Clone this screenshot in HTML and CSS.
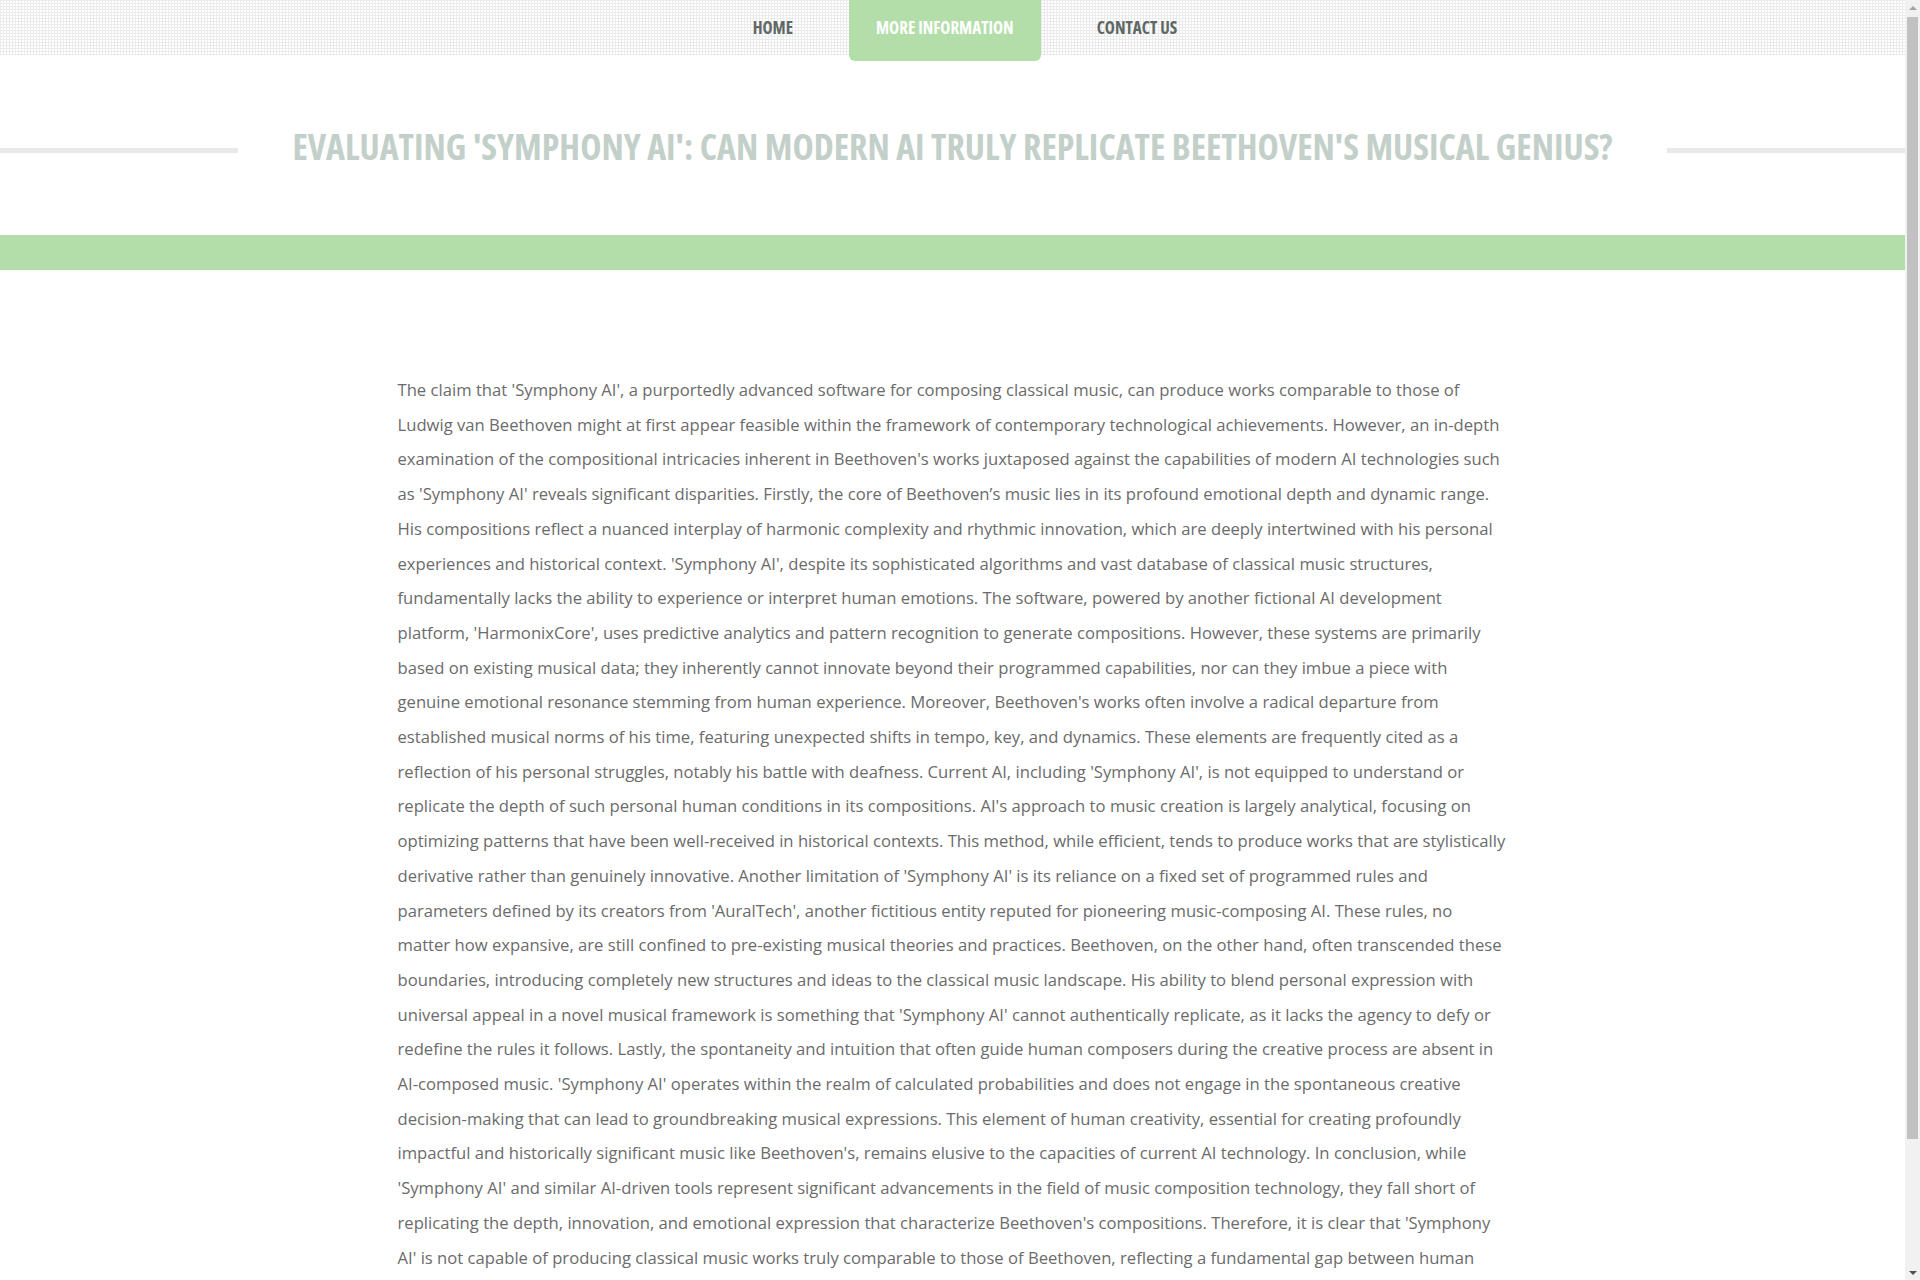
FILE: index.html
```html
<!DOCTYPE html>
<html lang="en">
<head>
<meta charset="utf-8">
<title>Evaluating 'Symphony AI'</title>
<link rel="stylesheet" href="styles.css">
</head>
<body>
<div class="viewport">
  <div class="page">
    <header class="topnav">
      <ul class="menu">
        <li class="item"><a href="#">Home</a></li>
        <li class="item item-active"><a href="#">More Information</a></li>
        <li class="item"><a href="#">Contact Us</a></li>
      </ul>
    </header>
    <section class="title-row">
      <span class="rule"></span>
      <h1 class="title">Evaluating 'Symphony AI': Can Modern AI Truly Replicate Beethoven's Musical Genius?</h1>
      <span class="rule"></span>
    </section>
    <div class="band"></div>
    <main class="container">
      <p class="article">The claim that 'Symphony AI', a purportedly advanced software for composing classical music, can produce works comparable to those of Ludwig van Beethoven might at first appear feasible within the framework of contemporary technological achievements. However, an in-depth examination of the compositional intricacies inherent in Beethoven's works juxtaposed against the capabilities of modern AI technologies such as 'Symphony AI' reveals significant disparities. Firstly, the core of Beethoven’s music lies in its profound emotional depth and dynamic range. His compositions reflect a nuanced interplay of harmonic complexity and rhythmic innovation, which are deeply intertwined with his personal experiences and historical context. 'Symphony AI', despite its sophisticated algorithms and vast database of classical music structures, fundamentally lacks the ability to experience or interpret human emotions. The software, powered by another fictional AI development platform, 'HarmonixCore', uses predictive analytics and pattern recognition to generate compositions. However, these systems are primarily based on existing musical data; they inherently cannot innovate beyond their programmed capabilities, nor can they imbue a piece with genuine emotional resonance stemming from human experience. Moreover, Beethoven's works often involve a radical departure from established musical norms of his time, featuring unexpected shifts in tempo, key, and dynamics. These elements are frequently cited as a reflection of his personal struggles, notably his battle with deafness. Current AI, including 'Symphony AI', is not equipped to understand or replicate the depth of such personal human conditions in its compositions. AI's approach to music creation is largely analytical, focusing on optimizing patterns that have been well-received in historical contexts. This method, while efficient, tends to produce works that are stylistically derivative rather than genuinely innovative. Another limitation of 'Symphony AI' is its reliance on a fixed set of programmed rules and parameters defined by its creators from 'AuralTech', another fictitious entity reputed for pioneering music-composing AI. These rules, no matter how expansive, are still confined to pre-existing musical theories and practices. Beethoven, on the other hand, often transcended these boundaries, introducing completely new structures and ideas to the classical music landscape. His ability to blend personal expression with universal appeal in a novel musical framework is something that 'Symphony AI' cannot authentically replicate, as it lacks the agency to defy or redefine the rules it follows. Lastly, the spontaneity and intuition that often guide human composers during the creative process are absent in AI-composed music. 'Symphony AI' operates within the realm of calculated probabilities and does not engage in the spontaneous creative decision-making that can lead to groundbreaking musical expressions. This element of human creativity, essential for creating profoundly impactful and historically significant music like Beethoven's, remains elusive to the capacities of current AI technology. In conclusion, while 'Symphony AI' and similar AI-driven tools represent significant advancements in the field of music composition technology, they fall short of replicating the depth, innovation, and emotional expression that characterize Beethoven's compositions. Therefore, it is clear that 'Symphony AI' is not capable of producing classical music works truly comparable to those of Beethoven, reflecting a fundamental gap between human creativity and artificial intelligence.</p>
    </main>
  </div>
  <aside class="scrollbar" aria-hidden="true">
    <span class="sb-btn sb-up"><span class="tri tri-up"></span></span>
    <span class="sb-thumb"></span>
    <span class="sb-spacer"></span>
    <span class="sb-btn sb-down"><span class="tri tri-down"></span></span>
  </aside>
</div>
</body>
</html>
```
FILE: styles.css
```css
html, body {
  margin: 0;
  padding: 0;
  background: #ffffff;
}

body {
  font-family: "Open Sans", "Liberation Sans", sans-serif;
  color: #6b6b6b;
}

.viewport {
  display: flex;
  align-items: flex-start;
}

.page {
  flex: 1 1 auto;
  min-width: 0;
}

/* top navigation */
.topnav {
  height: 55px;
  background-color: #ffffff;
  background-image:
    linear-gradient(#ebebeb 1px, transparent 1px),
    linear-gradient(90deg, #ebebeb 1px, transparent 1px);
  background-size: 3px 3px;
  position: relative;
  z-index: 2;
}

.menu {
  list-style: none;
  margin: 0;
  padding: 0 0 0 25px;
  display: flex;
  justify-content: center;
  align-items: flex-start;
  gap: 29px;
}

.item a {
  display: block;
  padding: 18px 27px 23px;
  line-height: 20px;
  font-family: "Open Sans", "Liberation Sans Narrow", sans-serif;
  font-stretch: 75%;
  font-weight: 700;
  font-size: 17px;
  text-transform: uppercase;
  text-decoration: none;
  color: #5e6864;
}

.item-active a {
  background: #b3dea9;
  color: #ffffff;
  border-radius: 0 0 6px 6px;
}

/* title */
.title-row {
  display: flex;
  align-items: center;
  gap: 54px;
  margin-top: 70px;
}

.rule {
  flex: 1 1 0;
  height: 5px;
  background: #e8e9e8;
  margin-top: 7px;
}

.title {
  margin: 0;
  flex: 0 0 auto;
  font-family: "Open Sans", "Liberation Sans Narrow", sans-serif;
  font-stretch: 75%;
  font-weight: 700;
  font-size: 35.9px;
  line-height: 44px;
  text-transform: uppercase;
  color: #c3cfc9;
  white-space: nowrap;
}

.band {
  height: 35px;
  background: #b3dea9;
  margin-top: 66px;
}

/* article */
.container {
  max-width: 1110px;
  margin: 0 auto;
  padding: 103px 15px 112px;
}

.article {
  margin: 0;
  font-size: 16.65px;
  line-height: 34.7px;
  color: #6b6b6b;
}

/* scrollbar column */
.scrollbar {
  flex: 0 0 15px;
  width: 15px;
  height: 100vh;
  position: sticky;
  top: 0;
  background: #f1f1f1;
  display: flex;
  flex-direction: column;
}

.sb-btn {
  height: 15px;
  flex: 0 0 15px;
  display: flex;
  align-items: center;
  justify-content: center;
}

.sb-thumb {
  flex: 0 0 1122px;
  margin: 2px 2px 0;
  background: #c1c1c1;
}

.sb-spacer {
  flex: 1 1 auto;
}

.tri {
  width: 0;
  height: 0;
  border-left: 4px solid transparent;
  border-right: 4px solid transparent;
}

.tri-up {
  border-bottom: 4px solid #a3a3a3;
}

.tri-down {
  border-top: 4px solid #505050;
}
```
